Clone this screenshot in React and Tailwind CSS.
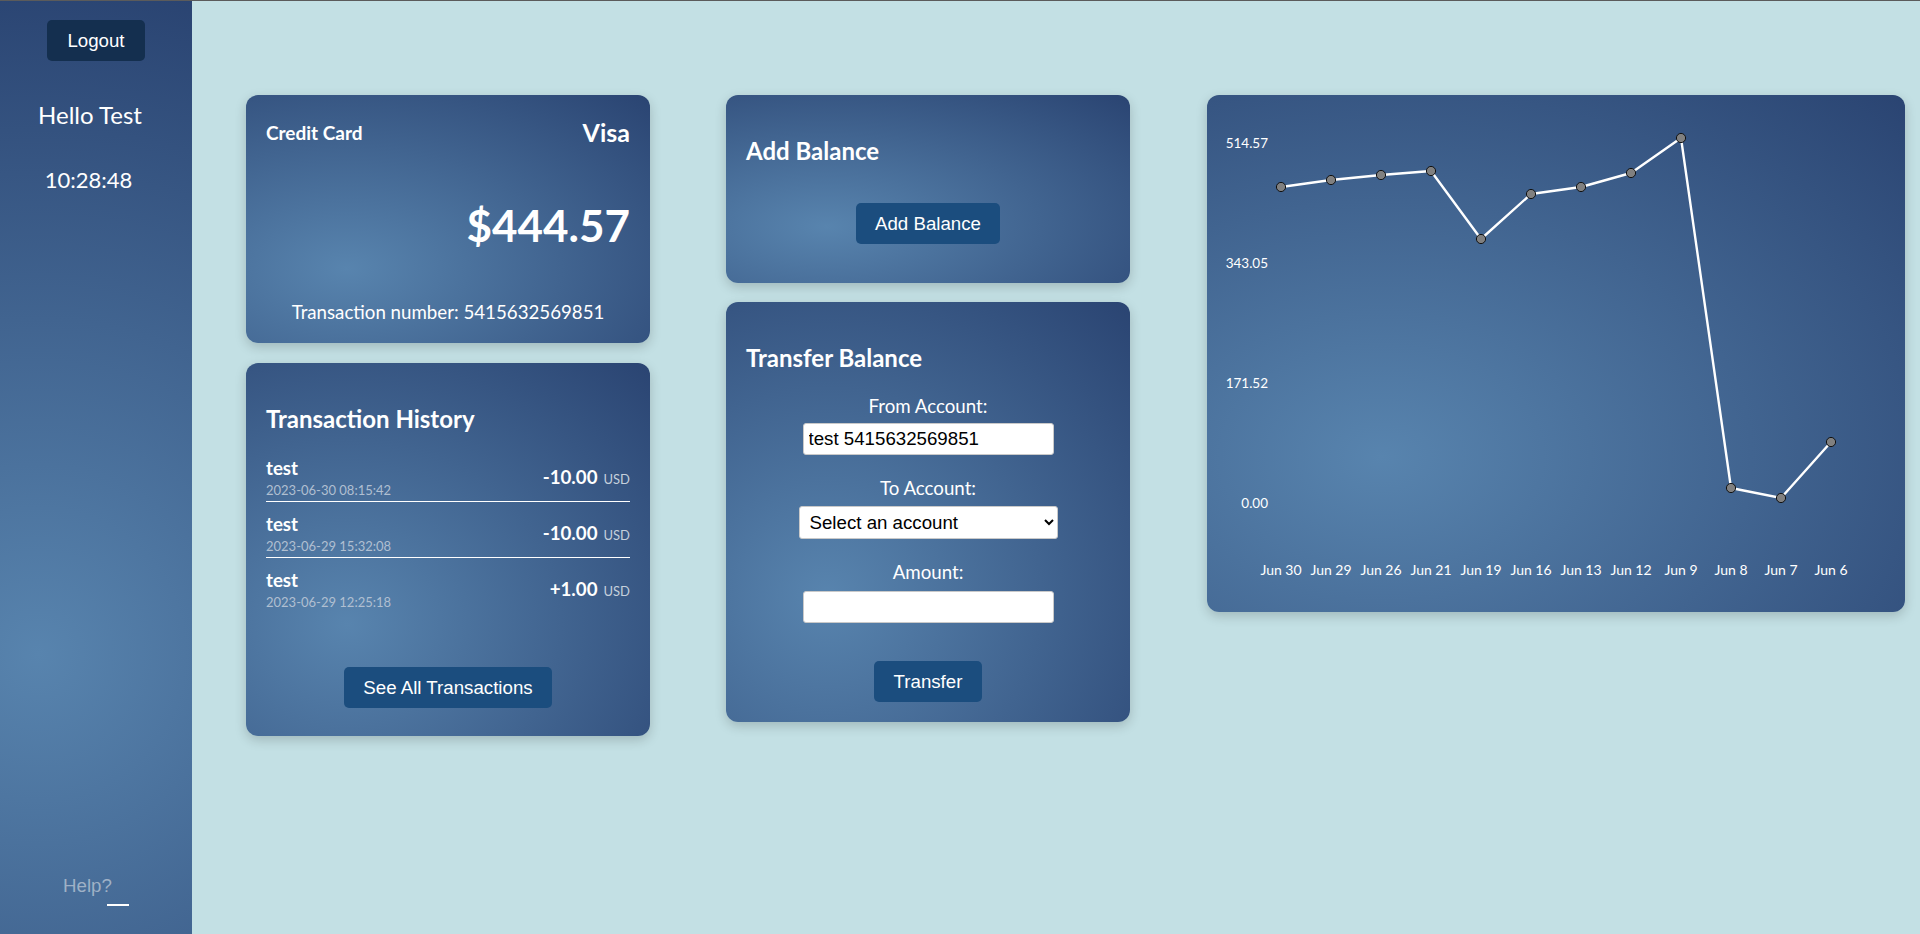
import React from 'react';

const card =
  'rounded-[12px] bg-[radial-gradient(ellipse_at_25%_70%,#5884ae_0%,#2a4472_100%)] shadow-[0_4px_12px_rgba(0,0,0,0.18)] text-white';
const btn =
  "rounded-[5px] bg-[#1b4d7e] px-[19.5px] py-[10px] text-[18.7px] leading-[21px] text-white font-['Liberation_Sans',Arial,sans-serif]";

const transactions = [
  { name: 'test', date: '2023-06-30 08:15:42', amount: '-10.00' },
  { name: 'test', date: '2023-06-29 15:32:08', amount: '-10.00' },
  { name: 'test', date: '2023-06-29 12:25:18', amount: '+1.00' },
];

// chart points in card coordinates
const points = [
  { label: 'Jun 30', x: 74, y: 92 },
  { label: 'Jun 29', x: 124, y: 85 },
  { label: 'Jun 26', x: 174, y: 80 },
  { label: 'Jun 21', x: 224, y: 76 },
  { label: 'Jun 19', x: 274, y: 144 },
  { label: 'Jun 16', x: 324, y: 99 },
  { label: 'Jun 13', x: 374, y: 92 },
  { label: 'Jun 12', x: 424, y: 78 },
  { label: 'Jun 9', x: 474, y: 43 },
  { label: 'Jun 8', x: 524, y: 393 },
  { label: 'Jun 7', x: 574, y: 403 },
  { label: 'Jun 6', x: 624, y: 347 },
];

const yTicks = [
  { v: '514.57', y: 48 },
  { v: '343.05', y: 168 },
  { v: '171.52', y: 288 },
  { v: '0.00', y: 408 },
];

const Sidebar = () => (
  <aside className="flex h-full w-[192px] shrink-0 flex-col items-center bg-[radial-gradient(circle_at_20%_70%,#5884ae_0%,#2a4472_100%)] text-white">
    <button className="mt-[19px] rounded-[5px] bg-[#142f4f] px-[20px] py-[10px] text-[18.7px] leading-[21px] font-['Liberation_Sans',Arial,sans-serif]">
      Logout
    </button>
    <div className="mt-[38px] mr-[12px] text-[24px] leading-[32px]">Hello Test</div>
    <div className="mt-[34px] mr-[15px] text-[22px] leading-[30px]">10:28:48</div>
    <div className="mt-auto mb-[28px] flex items-start font-['Liberation_Sans',Arial,sans-serif]">
      <span className="text-[18.7px] leading-[21px] text-[#9fb1c6]">Help?</span>
      <span className="-ml-[5px] h-[31px] w-[22px] border-b-2 border-white"></span>
    </div>
  </aside>
);

const CreditCard = () => (
  <div className={`${card} flex h-[248px] flex-col p-[20px]`}>
    <div className="mt-[1px] flex h-[32px] items-center justify-between">
      <span className="text-[19px] font-bold leading-[25px]">Credit Card</span>
      <span className="text-[25px] font-bold leading-[32px]">Visa</span>
    </div>
    <div className="mt-[45px] text-right text-[44px] font-bold leading-[64px]">$444.57</div>
    <div className="mt-[43px] text-center text-[18.7px] leading-[24px]">Transaction number: 5415632569851</div>
  </div>
);

const History = () => (
  <div className={`${card} flex h-[373px] flex-col p-[20px]`}>
    <h2 className="mt-[20px] text-[24px] font-bold leading-[32px]">Transaction History</h2>
    <div className="mt-[21px]">
      {transactions.map((t, i) => (
        <div
          key={i}
          className={`flex items-center justify-between pb-[2px] ${i < transactions.length - 1 ? 'mb-[10px] border-b border-white' : ''}`}
        >
          <div>
            <div className="text-[18.7px] font-bold leading-[24px]">{t.name}</div>
            <div className="mt-[1px] text-[13px] leading-[18px] text-[#b0bfd1]">{t.date}</div>
          </div>
          <div className="flex items-baseline gap-[6px]">
            <span className="text-[18.7px] font-bold">{t.amount}</span>
            <span className="text-[13px] text-[#c5d0dc]">USD</span>
          </div>
        </div>
      ))}
    </div>
    <button className={`${btn} mt-[54px] self-center`}>See All Transactions</button>
  </div>
);

const AddBalance = () => (
  <div className={`${card} flex h-[188px] flex-col p-[20px]`}>
    <h2 className="mt-[20px] text-[24px] font-bold leading-[32px]">Add Balance</h2>
    <button className={`${btn} mt-[36px] self-center`}>Add Balance</button>
  </div>
);

const field =
  "h-[33px] rounded-[3px] border border-[#c9c9c9] bg-white text-[18.7px] text-black font-['Liberation_Sans',Arial,sans-serif] self-center";

const Transfer = () => (
  <div className={`${card} flex h-[420px] flex-col p-[20px]`}>
    <h2 className="mt-[20px] text-[24px] font-bold leading-[32px]">Transfer Balance</h2>
    <label className="mt-[20px] text-center text-[18.7px] leading-[24px]">From Account:</label>
    <input className={`${field} mt-[5px] w-[251px] px-[5px]`} defaultValue="test 5415632569851" readOnly />
    <label className="mt-[21px] text-center text-[18.7px] leading-[24px]">To Account:</label>
    <select className={`${field} mt-[6px] w-[259px] pl-[6px] pr-[4px]`} defaultValue="">
      <option value="">Select an account</option>
    </select>
    <label className="mt-[21px] text-center text-[18.7px] leading-[24px]">Amount:</label>
    <input className={`${field} mt-[7px] w-[251px] px-[5px]`} />
    <button className={`${btn} mt-[38px] self-center`}>Transfer</button>
  </div>
);

const Chart = () => {
  const line = points.map((p) => `${p.x},${p.y}`).join(' ');
  return (
    <div className={`${card} h-[517px] w-[698px] overflow-hidden`}>
      <svg width="698" height="517" viewBox="0 0 698 517" className="block" fontFamily="Lato, sans-serif">
        {yTicks.map((t) => (
          <text key={t.v} x="61" y={t.y} fill="white" fontSize="13.5" textAnchor="end" dominantBaseline="central">
            {t.v}
          </text>
        ))}
        {points.map((p) => (
          <text key={p.label} x={p.x} y="474" fill="white" fontSize="14" textAnchor="middle" dominantBaseline="central">
            {p.label}
          </text>
        ))}
        <polyline points={line} fill="none" stroke="white" strokeWidth="2.4" strokeLinejoin="round" />
        {points.map((p) => (
          <circle key={p.label} cx={p.x} cy={p.y} r="4.6" fill="#808080" stroke="#111" strokeWidth="1" />
        ))}
      </svg>
    </div>
  );
};

const App = () => {
  return (
    <div className="flex h-[934px] w-full overflow-hidden border-t border-[#5b5b5b] bg-[#c3e0e4] font-['Lato',sans-serif]">
      <Sidebar />
      <main className="flex flex-1 items-start pl-[54px] pt-[94px]">
        <div className="flex w-[404px] flex-col gap-[20px]">
          <CreditCard />
          <History />
        </div>
        <div className="ml-[76px] flex w-[404px] flex-col gap-[19px]">
          <AddBalance />
          <Transfer />
        </div>
        <div className="ml-[77px]">
          <Chart />
        </div>
      </main>
    </div>
  );
};

export default App;
